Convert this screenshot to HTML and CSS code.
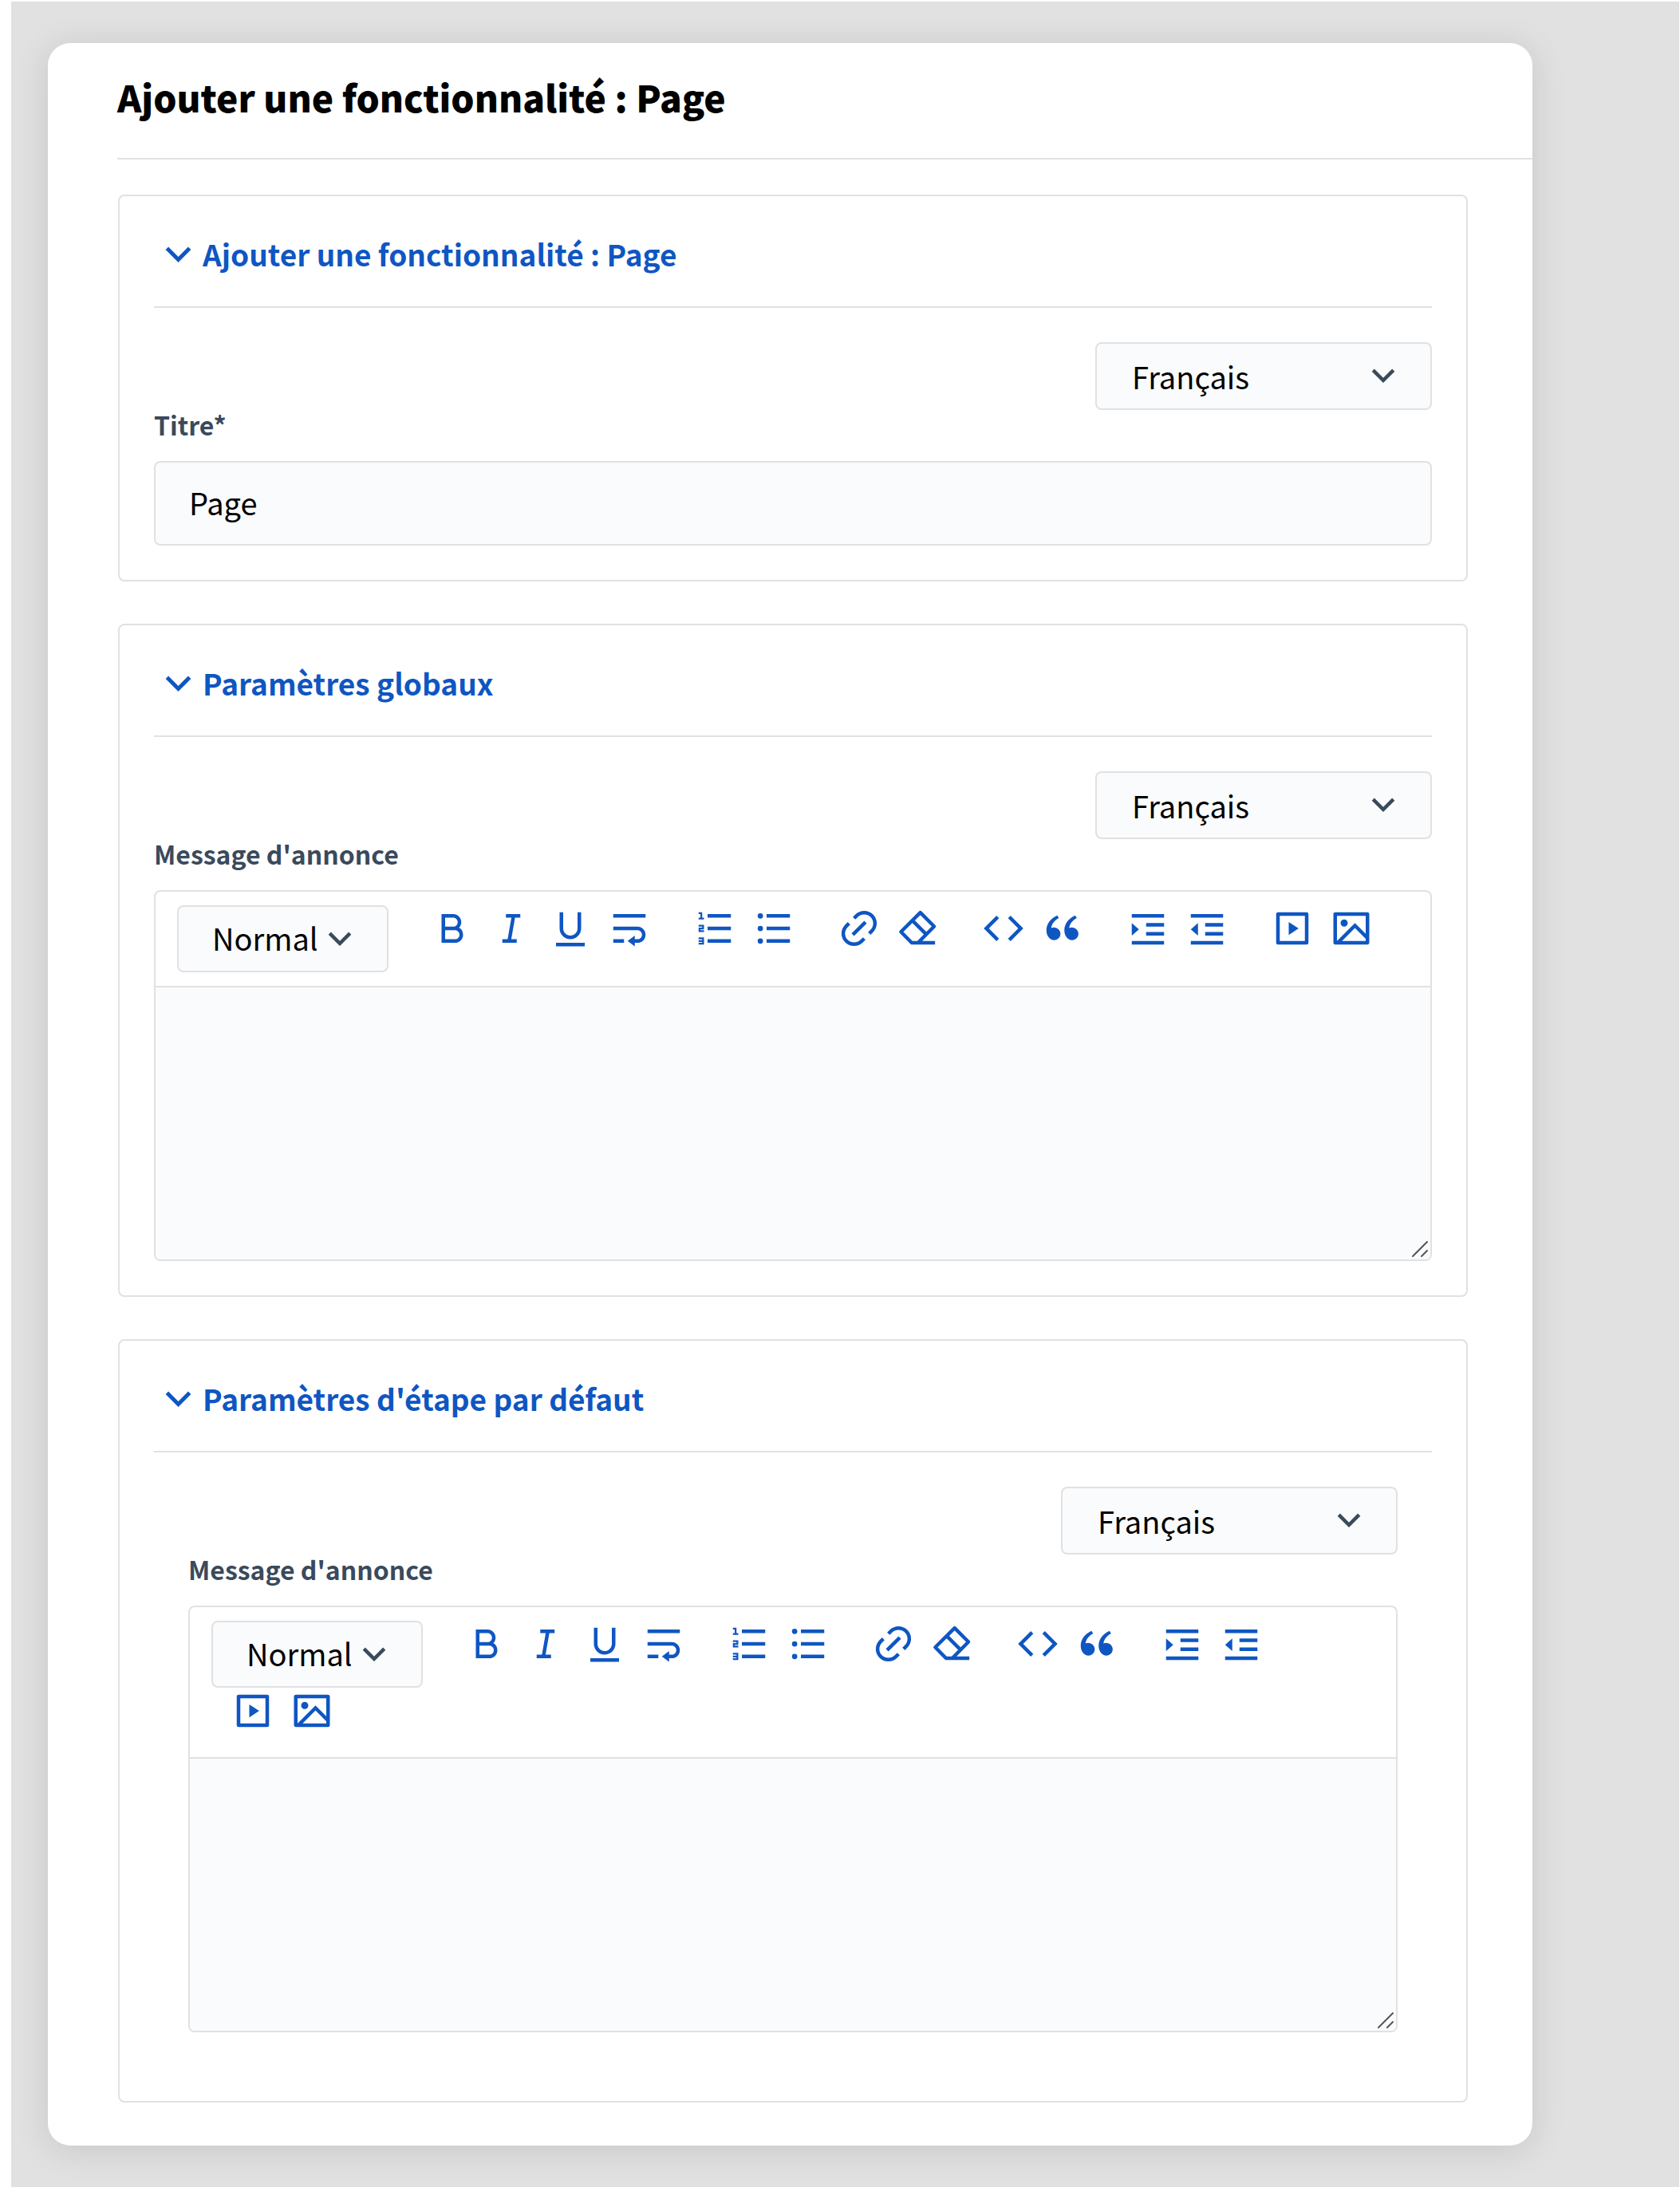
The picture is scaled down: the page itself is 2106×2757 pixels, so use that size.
FILE: index.html
```html
<!DOCTYPE html>
<html lang="fr">
<head>
    <meta charset="UTF-8">
    <meta name="viewport" content="width=device-width, initial-scale=1.0">
    <title>Ajouter une fonctionnalité : Page</title>
    <link rel="stylesheet" href="styles.css">
</head>
<body>

    <!-- Icon set -->
    <svg class="sprite" aria-hidden="true">
        <symbol id="chevron" viewBox="0 0 24 24"><path d="M12 13.17L16.95 8.22L18.36 9.64L12 16L5.64 9.64L7.05 8.22Z"/></symbol>
        <symbol id="bold" viewBox="0 0 24 24"><path d="M8 11H12.5C13.88 11 15 9.88 15 8.5C15 7.12 13.88 6 12.5 6H8V11ZM18 15.5C18 17.99 15.99 20 13.5 20H6V4H12.5C14.99 4 17 6.01 17 8.5C17 9.7 16.53 10.8 15.76 11.61C17.1 12.38 18 13.84 18 15.5ZM8 13V18H13.5C14.88 18 16 16.88 16 15.5C16 14.12 14.88 13 13.5 13H8Z"/></symbol>
        <symbol id="italic" viewBox="0 0 24 24"><path d="M15 20H7V18H9.93L12.04 6H9V4H17V6H14.07L11.96 18H15V20Z"/></symbol>
        <symbol id="underline" viewBox="0 0 24 24"><path d="M8 3V12C8 14.21 9.79 16 12 16C14.21 16 16 14.21 16 12V3H18V12C18 15.31 15.31 18 12 18C8.69 18 6 15.31 6 12V3H8ZM4 20H20V22H4V20Z"/></symbol>
        <symbol id="wrap" viewBox="0 0 24 24"><path d="M15 18H16.5C17.88 18 19 16.88 19 15.5C19 14.12 17.88 13 16.5 13H3V11H16.5C18.99 11 21 13.01 21 15.5C21 17.99 18.99 20 16.5 20H15V22L11 19L15 16V18ZM3 4H21V6H3V4ZM9 18V20H3V18H9Z"/></symbol>
        <symbol id="ordered" viewBox="0 0 24 24"><path d="M8 4h13v2H8V4zM5 3v3h1v1H3V6h1V4H3V3h2zM3 14v-2.5h2V11H3v-1h3v2.5H4v.5h2v1H3zm2 5.5H3v-1h2V18H3v-1h3v4H3v-1h2v-.5zM8 11h13v2H8v-2zm0 7h13v2H8v-2z"/></symbol>
        <symbol id="bullets" viewBox="0 0 24 24"><path d="M8 4H21V6H8V4ZM8 11H21V13H8V11ZM8 18H21V20H8V18Z"/><circle cx="4.5" cy="5" r="1.5"/><circle cx="4.5" cy="12" r="1.5"/><circle cx="4.5" cy="19" r="1.5"/></symbol>
        <symbol id="link" viewBox="0 0 24 24"><path d="M18.36 15.54L16.95 14.12L18.36 12.71C20.32 10.75 20.32 7.59 18.36 5.64C16.41 3.68 13.25 3.68 11.29 5.64L9.88 7.05L8.46 5.64L9.88 4.22C12.61 1.49 17.04 1.49 19.78 4.22C22.51 6.96 22.51 11.39 19.78 14.12L18.36 15.54ZM15.54 18.36L14.12 19.78C11.39 22.51 6.96 22.51 4.22 19.78C1.49 17.04 1.49 12.61 4.22 9.88L5.64 8.46L7.05 9.88L5.64 11.29C3.68 13.25 3.68 16.41 5.64 18.36C7.59 20.32 10.75 20.32 12.71 18.36L14.12 16.95L15.54 18.36ZM14.83 7.76L16.24 9.17L9.17 16.24L7.76 14.83L14.83 7.76Z"/></symbol>
        <symbol id="eraser" viewBox="0 0 24 24"><path d="M21.4 20H8.4L2.4 13.9L13.2 3.2L20.9 10.9L11.9 20M8.8 7.6L16.5 15.3" fill="none" stroke="currentColor" stroke-width="2" stroke-linejoin="round"/></symbol>
        <symbol id="code" viewBox="0 0 24 24"><path d="M23 12L15.93 19.07L14.51 17.66L20.17 12L14.51 6.34L15.93 4.93L23 12ZM3.83 12L9.49 17.66L8.07 19.07L1 12L8.07 4.93L9.49 6.34L3.83 12Z"/></symbol>
        <symbol id="quote" viewBox="0 0 24 24"><path d="M4.58 17.32C3.55 16.23 3 15 3 13.01C3 9.51 5.46 6.37 9.03 4.82L9.92 6.2C6.59 8.01 5.94 10.35 5.68 11.82C6.21 11.54 6.92 11.45 7.6 11.51C9.41 11.68 10.83 13.16 10.83 15C10.83 16.93 9.26 18.5 7.33 18.5C6.26 18.5 5.23 18.01 4.58 17.32ZM14.58 17.32C13.55 16.23 13 15 13 13.01C13 9.51 15.46 6.37 19.03 4.82L19.92 6.2C16.59 8.01 15.94 10.35 15.68 11.82C16.21 11.54 16.92 11.45 17.6 11.51C19.41 11.68 20.83 13.16 20.83 15C20.83 16.93 19.26 18.5 17.33 18.5C16.26 18.5 15.23 18.01 14.58 17.32Z"/></symbol>
        <symbol id="indent" viewBox="0 0 24 24"><path d="M3 4H21V6H3V4ZM3 19H21V21H3V19ZM11 14H21V16H11V14ZM11 9H21V11H11V9ZM7 12.5L3 16V9L7 12.5Z"/></symbol>
        <symbol id="outdent" viewBox="0 0 24 24"><path d="M3 4H21V6H3V4ZM3 19H21V21H3V19ZM11 14H21V16H11V14ZM11 9H21V11H11V9ZM3 12.5L7 9V16L3 12.5Z"/></symbol>
        <symbol id="video" viewBox="0 0 24 24"><path d="M4 3H20A1 1 0 0 1 21 4V20A1 1 0 0 1 20 21H4A1 1 0 0 1 3 20V4A1 1 0 0 1 4 3ZM5 5V19H19V5H5ZM10 8.4L15.5 12L10 15.7Z" fill-rule="evenodd"/></symbol>
        <symbol id="image" viewBox="0 0 24 24"><path d="M2.99 21C2.44 21 2 20.56 2 20.01V3.99C2 3.44 2.46 3 2.99 3H21.01C21.56 3 22 3.44 22 3.99V20.01C22 20.56 21.54 21 21.01 21H2.99ZM20 15V5H4V19L14 9L20 15ZM20 17.83L14 11.83L6.83 19H20V17.83ZM8 11C6.9 11 6 10.1 6 9C6 7.9 6.9 7 8 7C9.1 7 10 7.9 10 9C10 10.1 9.1 11 8 11Z"/></symbol>
        <symbol id="grip" viewBox="0 0 20 20"><path d="M1 19L19 1M12 19L19 12" fill="none" stroke="#555" stroke-width="2" stroke-linecap="round"/></symbol>
    </svg>

    <main class="backdrop">
        <div class="card">
            <header class="card-header">
                <h1>Ajouter une fonctionnalité : Page</h1>
            </header>

            <form class="card-content">
                <section class="panel">
                    <h2><button type="button" class="panel-title"><svg><use href="#chevron"/></svg>Ajouter une fonctionnalité : Page</button></h2>
                    <div class="select language">
                        <select aria-label="Langue du titre"><option>Français</option></select>
                        <svg><use href="#chevron"/></svg>
                    </div>
                    <label for="title">Titre*</label>
                    <input type="text" id="title" value="Page">
                </section>

                <section class="panel">
                    <h2><button type="button" class="panel-title"><svg><use href="#chevron"/></svg>Paramètres globaux</button></h2>
                    <div class="select language">
                        <select aria-label="Langue du message"><option>Français</option></select>
                        <svg><use href="#chevron"/></svg>
                    </div>
                    <label for="message-global">Message d'annonce</label>
                    <div class="editor">
                        <div class="toolbar">
                            <div class="select format">
                                <select aria-label="Format"><option>Normal</option></select>
                                <svg><use href="#chevron"/></svg>
                            </div>
                            <div class="group">
                                <button type="button" aria-label="Gras"><svg><use href="#bold"/></svg></button>
                                <button type="button" aria-label="Italique"><svg><use href="#italic"/></svg></button>
                                <button type="button" aria-label="Souligné"><svg><use href="#underline"/></svg></button>
                                <button type="button" aria-label="Retour à la ligne"><svg><use href="#wrap"/></svg></button>
                            </div>
                            <div class="group">
                                <button type="button" aria-label="Liste numérotée"><svg><use href="#ordered"/></svg></button>
                                <button type="button" aria-label="Liste à puces"><svg><use href="#bullets"/></svg></button>
                            </div>
                            <div class="group">
                                <button type="button" aria-label="Lien"><svg><use href="#link"/></svg></button>
                                <button type="button" aria-label="Effacer le format"><svg><use href="#eraser"/></svg></button>
                            </div>
                            <div class="group">
                                <button type="button" aria-label="Code"><svg><use href="#code"/></svg></button>
                                <button type="button" aria-label="Citation"><svg><use href="#quote"/></svg></button>
                            </div>
                            <div class="group">
                                <button type="button" aria-label="Augmenter le retrait"><svg><use href="#indent"/></svg></button>
                                <button type="button" aria-label="Diminuer le retrait"><svg><use href="#outdent"/></svg></button>
                            </div>
                            <div class="group">
                                <button type="button" aria-label="Vidéo"><svg><use href="#video"/></svg></button>
                                <button type="button" aria-label="Image"><svg><use href="#image"/></svg></button>
                            </div>
                        </div>
                        <textarea id="message-global"></textarea>
                        <svg class="grip"><use href="#grip"/></svg>
                    </div>
                </section>

                <section class="panel">
                    <h2><button type="button" class="panel-title"><svg><use href="#chevron"/></svg>Paramètres d'étape par défaut</button></h2>
                    <div class="nested">
                        <div class="select language">
                            <select aria-label="Langue du message d'étape"><option>Français</option></select>
                            <svg><use href="#chevron"/></svg>
                        </div>
                        <label for="message-step">Message d'annonce</label>
                        <div class="editor">
                            <div class="toolbar">
                                <div class="select format">
                                    <select aria-label="Format"><option>Normal</option></select>
                                    <svg><use href="#chevron"/></svg>
                                </div>
                                <div class="group">
                                    <button type="button" aria-label="Gras"><svg><use href="#bold"/></svg></button>
                                    <button type="button" aria-label="Italique"><svg><use href="#italic"/></svg></button>
                                    <button type="button" aria-label="Souligné"><svg><use href="#underline"/></svg></button>
                                    <button type="button" aria-label="Retour à la ligne"><svg><use href="#wrap"/></svg></button>
                                </div>
                                <div class="group">
                                    <button type="button" aria-label="Liste numérotée"><svg><use href="#ordered"/></svg></button>
                                    <button type="button" aria-label="Liste à puces"><svg><use href="#bullets"/></svg></button>
                                </div>
                                <div class="group">
                                    <button type="button" aria-label="Lien"><svg><use href="#link"/></svg></button>
                                    <button type="button" aria-label="Effacer le format"><svg><use href="#eraser"/></svg></button>
                                </div>
                                <div class="group">
                                    <button type="button" aria-label="Code"><svg><use href="#code"/></svg></button>
                                    <button type="button" aria-label="Citation"><svg><use href="#quote"/></svg></button>
                                </div>
                                <div class="group">
                                    <button type="button" aria-label="Augmenter le retrait"><svg><use href="#indent"/></svg></button>
                                    <button type="button" aria-label="Diminuer le retrait"><svg><use href="#outdent"/></svg></button>
                                </div>
                                <div class="group">
                                    <button type="button" aria-label="Vidéo"><svg><use href="#video"/></svg></button>
                                    <button type="button" aria-label="Image"><svg><use href="#image"/></svg></button>
                                </div>
                            </div>
                            <textarea id="message-step"></textarea>
                            <svg class="grip"><use href="#grip"/></svg>
                        </div>
                    </div>
                </section>
            </form>
        </div>
    </main>

</body>
</html>
```
FILE: styles.css
```css
* {
    box-sizing: border-box;
}

body {
    margin: 0;
    padding: 2px 1px 14px 14px;
    background: white;
    color: black;
    font-family: "Noto Sans CJK SC", "Noto Sans", sans-serif;
    font-size: 38px;
}

h1, h2 {
    margin: 0;
}

button, input, select, textarea {
    font: inherit;
    color: inherit;
}

svg {
    fill: currentColor;
}

.sprite {
    display: none;
}

.backdrop {
    background: #e1e1e1;
    padding: 52px 184px 52px 46px;
    overflow: hidden;
}

.card {
    background: white;
    border-radius: 28px;
    box-shadow: 0 5px 44px rgba(0, 0, 0, 0.12);
}

.card-header {
    margin-left: 87px;
    padding: 39px 0 49px;
    border-bottom: 2px solid #e1e1e1;
}

.card-header h1 {
    font-size: 46px;
    line-height: 56px;
    font-weight: 900;
}

.card-content {
    display: flex;
    flex-direction: column;
    gap: 53px;
    padding: 44px 81px 54px 88px;
}

.panel {
    border: 2px solid #e1e1e1;
    border-radius: 8px;
    padding: 43px;
}

.panel h2 {
    padding-bottom: 37px;
    margin-bottom: 43px;
    border-bottom: 2px solid #e1e1e1;
}

.panel-title {
    display: flex;
    align-items: center;
    padding: 0;
    border: none;
    background: none;
    color: #0f56c2;
    font-size: 37px;
    line-height: 58px;
    font-weight: bold;
    cursor: pointer;
}

.panel-title svg {
    width: 61px;
    height: 60px;
    margin-bottom: -2px;
}

.nested {
    padding: 0 43px 43px;
}

label {
    display: block;
    color: #3a4a5c;
    font-size: 32px;
    line-height: 36px;
    font-weight: bold;
    margin-bottom: 28px;
}

input {
    display: block;
    width: 100%;
    height: 106px;
    padding: 0 42px 4px;
    border: 2px solid #e1e1e1;
    border-radius: 8px;
    background: #fafbfd;
}

.select {
    position: relative;
    height: 85px;
}

.select select {
    display: block;
    width: 100%;
    height: 100%;
    padding: 0 44px;
    border: 2px solid #e1e1e1;
    border-radius: 8px;
    background: #fafbfd;
    appearance: none;
}

/* arrow over the drop-down */
.select svg {
    position: absolute;
    top: 15px;
    width: 54px;
    height: 54px;
    color: #3a4a5c;
    pointer-events: none;
}

.language {
    width: 422px;
    margin-left: auto;
}

.language svg {
    right: 34px;
}

.format {
    width: 265px;
    height: 84px;
    margin-right: 28px;
}

.format select {
    padding: 0 42px 4px;
}

.format svg {
    right: 34px;
}

.editor {
    position: relative;
    border: 2px solid #e1e1e1;
    border-radius: 8px;
    overflow: hidden;
}

.toolbar {
    display: flex;
    flex-wrap: wrap;
    padding: 17px 16px 17px 27px;
    border-bottom: 2px solid #e1e1e1;
}

.group {
    display: flex;
    height: 70px;
    padding: 2px 18px 0 15px;
}

.group button {
    width: 74px;
    height: 54px;
    padding: 0 10px;
    border: none;
    background: none;
    color: #0f56c2;
    cursor: pointer;
}

.group svg {
    display: block;
    width: 54px;
    height: 54px;
}

textarea {
    display: block;
    width: 100%;
    height: 341px;
    padding: 30px 44px;
    border: none;
    background: #fafbfd;
    resize: none;
}

.grip {
    position: absolute;
    right: 3px;
    bottom: 3px;
    width: 20px;
    height: 20px;
}
```
